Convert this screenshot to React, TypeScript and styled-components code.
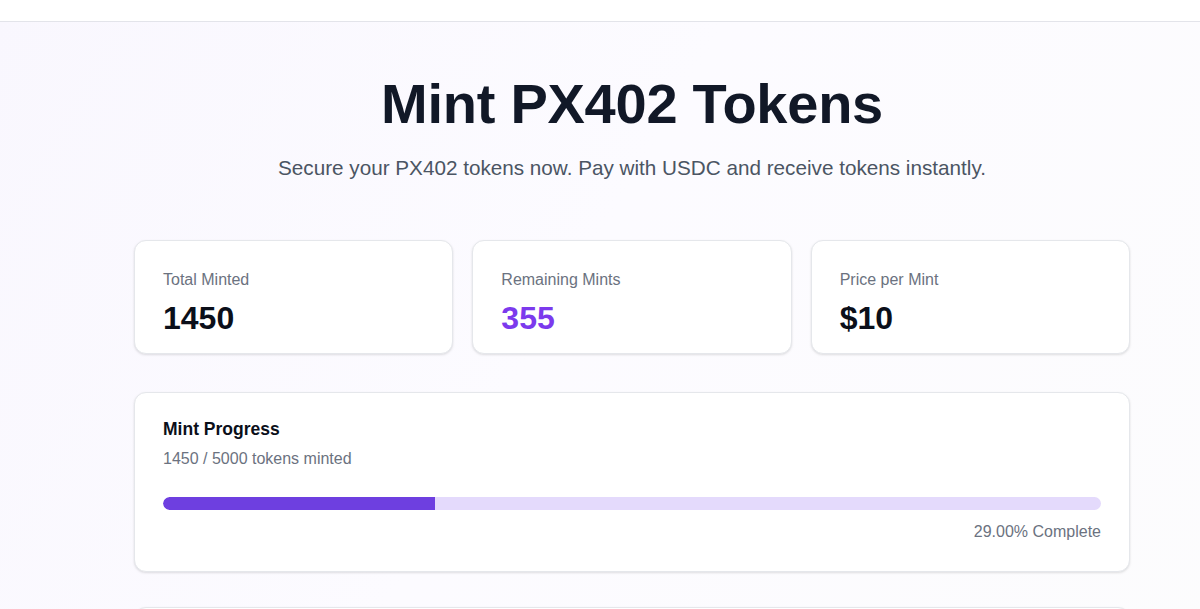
import React from 'react'
import styled, { createGlobalStyle } from 'styled-components'

const GlobalStyle = createGlobalStyle`
  html, body {
    margin: 0;
    padding: 0;
  }
  body {
    font-family: "Liberation Sans", Arial, Helvetica, sans-serif;
    background: #ffffff;
    color: #111827;
    overflow: hidden;
  }
`

const TOTAL_SUPPLY = 5000
const MINTED = 1450
const PRICE = 10

const stats = [
  { label: 'Total Minted', value: String(MINTED), accent: false },
  { label: 'Remaining Mints', value: '355', accent: true },
  { label: 'Price per Mint', value: `$${PRICE}`, accent: false },
]

export default function App() {
  const percent = (MINTED / TOTAL_SUPPLY) * 100

  return (
    <>
      <GlobalStyle />
      <Page>
        <TopBar />
        <Main>
          <Container>
            <Hero>
              <Title>Mint PX402 Tokens</Title>
              <Subtitle>
                Secure your PX402 tokens now. Pay with USDC and receive tokens instantly.
              </Subtitle>
            </Hero>

            <StatsGrid>
              {stats.map((s) => (
                <StatCard key={s.label}>
                  <StatLabel>{s.label}</StatLabel>
                  <StatValue $accent={s.accent}>{s.value}</StatValue>
                </StatCard>
              ))}
            </StatsGrid>

            <ProgressCard>
              <ProgressTitle>Mint Progress</ProgressTitle>
              <ProgressMeta>
                {MINTED} / {TOTAL_SUPPLY} tokens minted
              </ProgressMeta>
              <Track>
                <Fill style={{ width: `${percent}%` }} />
              </Track>
              <ProgressFoot>{percent.toFixed(2)}% Complete</ProgressFoot>
            </ProgressCard>

            {/* next section starts just below the fold */}
            <MintCard />
          </Container>
        </Main>
      </Page>
    </>
  )
}

const Page = styled.div`
  min-height: 100vh;
  display: flex;
  flex-direction: column;
  background: linear-gradient(120deg, #f9f7fe 0%, #fcfbff 45%, #fcfcfd 100%);
`

const TopBar = styled.header`
  height: 21px;
  background: #ffffff;
  border-bottom: 1px solid #e3e4ea;
`

const Main = styled.main`
  padding: 48px 0 0 64px;
`

const Container = styled.div`
  max-width: 996px;
  margin: 0 auto;
  display: flex;
  flex-direction: column;
`

const Hero = styled.section`
  display: flex;
  flex-direction: column;
  align-items: center;
  text-align: center;
`

const Title = styled.h1`
  margin: 0;
  font-size: 56px;
  line-height: 1.2;
  font-weight: 700;
  color: #111827;
  letter-spacing: -0.25px;
`

const Subtitle = styled.p`
  margin: 15px 0 0;
  font-size: 20.7px;
  line-height: 31px;
  color: #4b5563;
`

const StatsGrid = styled.div`
  display: grid;
  grid-template-columns: repeat(3, 1fr);
  gap: 19px;
  margin-top: 57px;
`

const Card = styled.div`
  background: #ffffff;
  border: 1px solid #e5e7eb;
  border-radius: 12px;
  box-shadow: 0 1px 3px rgba(0, 0, 0, 0.08), 0 1px 2px rgba(0, 0, 0, 0.05);
`

const StatCard = styled(Card)`
  padding: 27px 28px 15px;
  display: flex;
  flex-direction: column;
  gap: 6px;
`

const StatLabel = styled.div`
  font-size: 16px;
  line-height: 24px;
  color: #6b7280;
`

const StatValue = styled.div<{ $accent: boolean }>`
  font-size: 32px;
  line-height: 40px;
  font-weight: 700;
  color: ${({ $accent }) => ($accent ? '#7c3aed' : '#0b0f1a')};
`

const ProgressCard = styled(Card)`
  margin-top: 38px;
  padding: 22px 28px 27px;
  display: flex;
  flex-direction: column;
`

const ProgressTitle = styled.h2`
  margin: 0;
  font-size: 17.5px;
  line-height: 28px;
  font-weight: 700;
  color: #0b0f1a;
`

const ProgressMeta = styled.div`
  margin-top: 4px;
  font-size: 16px;
  line-height: 24px;
  color: #6b7280;
`

const Track = styled.div`
  margin-top: 26px;
  height: 13px;
  border-radius: 999px;
  background: #e4dafc;
  overflow: hidden;
`

const Fill = styled.div`
  height: 100%;
  background: #6e3fe0;
  border-radius: 999px 0 0 999px;
`

const ProgressFoot = styled.div`
  margin-top: 10px;
  text-align: right;
  font-size: 16px;
  line-height: 24px;
  color: #6b7280;
`

const MintCard = styled(Card)`
  margin-top: 35px;
  height: 160px;
`
